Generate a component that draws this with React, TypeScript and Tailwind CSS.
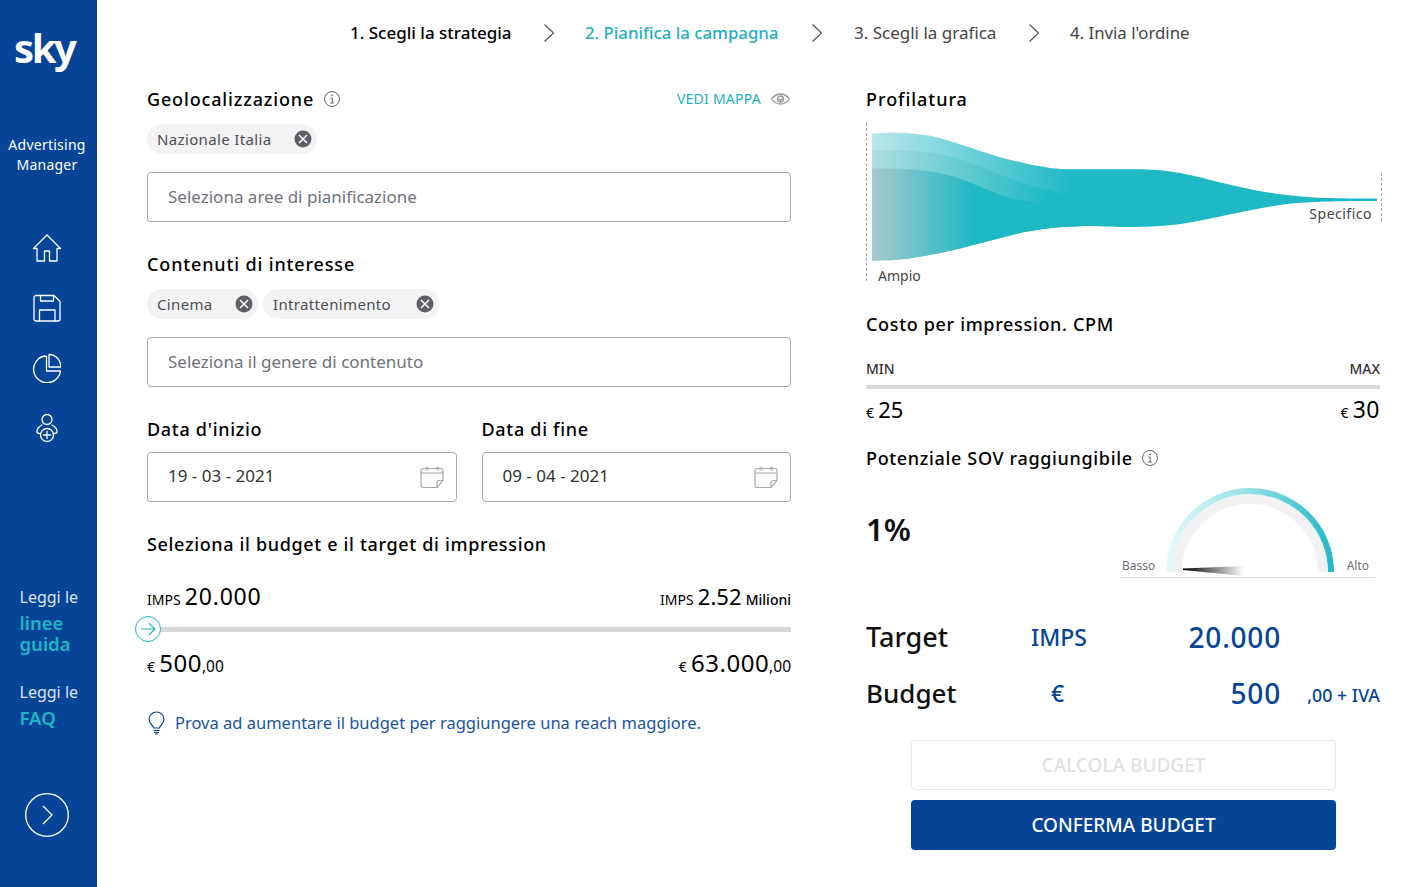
import React from "react";

const Chip = ({ label, w }: { label: string; w: string }) => (
  <div className={`flex h-[30px] items-center justify-between rounded-[15px] bg-[#f3f3f3] pl-[10px] pr-[5px] ${w}`}>
    <span className="text-[15px] tracking-[0.35px] text-[#4a4f55]">{label}</span>
    <svg width="18" height="18" viewBox="0 0 18 18">
      <circle cx="9" cy="9" r="8.500" fill="#5b6067" />
      <path d="M5 5l8 8M13 5l-8 8" stroke="#fff" strokeWidth="1.500" />
    </svg>
  </div>
);

const Info = () => (
  <svg width="18" height="18" viewBox="0 0 18 18" fill="none" stroke="#666">
    <circle cx="9" cy="9" r="7.500" strokeWidth="1" />
    <path d="M7.500 8h1.700v5M7.300 13h3.600" strokeWidth="1" />
    <circle cx="9" cy="5.300" r="0.900" fill="#666" stroke="none" />
  </svg>
);

const Calendar = () => (
  <svg width="24" height="24" viewBox="0 0 24 24" fill="none" stroke="#aaa" strokeWidth="1.200">
    <path d="M1 5.500a2 2 0 012-2h18a2 2 0 012 2v10l-6 7H3a2 2 0 01-2-2z" fill="#fbfbfb" />
    <path d="M1 8h22M23 15.500h-4a2 2 0 00-2 2v5" />
    <path d="M6 1.500v4M8 1.500v4M17.500 2a1.500 1.500 0 100 3 1.500 1.500 0 000-3z" strokeWidth="1" />
  </svg>
);

const Chevron = () => (
  <svg width="12" height="20" viewBox="0 0 12 20" fill="none" stroke="#555" strokeWidth="1.200" className="block">
    <path d="M1.500 1.500L10.500 10 1.500 18.500" />
  </svg>
);

const TextInput = ({ text }: { text: string }) => (
  <div className="flex h-[50px] items-center rounded-[4px] border border-[#a9a9a9] pl-5 text-[17px] text-[#6e7379]">
    {text}
  </div>
);

const DateInput = ({ value }: { value: string }) => (
  <div className="flex h-[50px] flex-1 items-center justify-between rounded-[4px] border border-[#a9a9a9] pl-5 pr-[12px] text-[17px] text-[#333]">
    <span className="pb-[2px]">{value}</span>
    <Calendar />
  </div>
);

const Heading = ({ children, cls = "tracking-[0.6px]" }: { children: React.ReactNode; cls?: string }) => (
  <h2 className={`text-[18px] font-medium leading-[24px] text-black ${cls}`}>{children}</h2>
);

const Icon = ({ children }: { children: React.ReactNode }) => (
  <svg width="30" height="30" viewBox="0 0 30 30" fill="none" stroke="#fff" strokeWidth="1.300" strokeLinejoin="round" strokeLinecap="round">
    {children}
  </svg>
);

const BODY =
  "M6 11.500C26 10 52 10 74 16C105 25 131 36 158 41C180 46 190 47 205 47.300L270 47.300C300 47.500 315 51 337 56C368 64 394 70 421 73C447 76 468 76.500 511 76.500V79C468 79 447 79.500 421 82C384 87 352 96 315 102C284 106 252 105 237 104.500C210 103 184 105 158 110C116 120 89 129 58 134C37 138 21 138.500 6 138.500Z";

export default function App() {
  return (
    <div className="flex h-[887px] w-[1424px] overflow-hidden bg-white font-['Noto_Sans','Liberation_Sans',sans-serif]">
      <aside className="flex w-[97px] shrink-0 flex-col bg-[#064497] text-white">
        <div className="h-[75px] pl-[14px] pt-[28px] text-[40px] font-bold leading-[40px] tracking-[-2.400px]">sky</div>
        <div className="mt-[60px] pr-[3px] text-center text-[14px] leading-[20px] tracking-[0.25px]">
          Advertising
          <br />
          Manager
        </div>
        <nav className="mt-[58px] flex flex-col items-center gap-[30px] pr-[3px]">
          <Icon>
            <path d="M15 2L1.500 15.500h3.500V28h7.500V18h5v10H25V15.500h3.500z" />
          </Icon>
          <Icon>
            <path d="M4 2.500h18l6 6V26a2 2 0 01-2 2H4a2 2 0 01-2-2V4.500a2 2 0 012-2z" />
            <path d="M8.500 2.500V8h13V2.500M7.500 28V17h15.500v11" />
          </Icon>
          <Icon>
            <path d="M12.500 3A13.500 13.500 0 1028.500 18H14.500V3.500z" />
            <path d="M17 1.500A11.500 11.500 0 0128.500 14H17z" />
          </Icon>
          <Icon>
            <circle cx="15" cy="6.500" r="5" />
            <path d="M10 12c-3 1.500-5 3.500-5 6.500 0 1.500 1 2 2.500 2h1.500M20 12c3 1.500 5 3.500 5 6.500 0 1.500-1 2-2.500 2H21" />
            <circle cx="15" cy="22" r="6.500" />
            <path d="M15 18.500v7M11.500 22h7" />
          </Icon>
        </nav>
        <div className="mt-[143px] pl-[19.500px] text-[16px]">
          <div className="leading-[22px] text-[#dde3ee]">Leggi le</div>
          <div className="mt-[4px] text-[18.500px] font-semibold leading-[21px] text-[#1fb4c4]">
            linee
            <br />
            guida
          </div>
          <div className="mt-[27px] leading-[22px] text-[#dde3ee]">Leggi le</div>
          <div className="mt-[4px] text-[18.500px] font-semibold leading-[21px] text-[#1fb4c4]">FAQ</div>
        </div>
        <div className="mt-[65px] flex justify-center pr-[3px]">
          <svg width="44" height="44" viewBox="0 0 44 44" fill="none" stroke="#fff" strokeWidth="1.300">
            <circle cx="22" cy="22" r="21.300" />
            <path d="M18 13l9 9-9 9" />
          </svg>
        </div>
      </aside>

      <main className="flex min-w-0 flex-1 flex-col">
        <header className="flex h-[67px] items-center whitespace-nowrap pb-[1px] pl-[253px] text-[17px]">
          <span className="w-[160px] font-medium text-black">1. Scegli la strategia</span>
          <span className="ml-[33px] mr-[30px]"><Chevron /></span>
          <span className="w-[194px] text-[16.800px] font-medium text-[#1fb0bf]">2. Pianifica la campagna</span>
          <span className="ml-[32px] mr-[31px]"><Chevron /></span>
          <span className="w-[141px] text-[#444]">3. Scegli la grafica</span>
          <span className="ml-[33px] mr-[30px]"><Chevron /></span>
          <span className="text-[16.800px] text-[#444]">4. Invia l'ordine</span>
        </header>

        <div className="flex pl-[50px]">
          <section className="w-[644px]">
            <div className="mt-[20px] flex h-[24px] items-center justify-between">
              <div className="flex items-center gap-[9px]">
                <Heading cls="tracking-[0.85px]">Geolocalizzazione</Heading>
                <Info />
              </div>
              <div className="flex items-center gap-[10px] pb-[1px] pr-[1px] text-[14px] tracking-[0.25px] text-[#1fb0bf]">
                VEDI MAPPA
                <svg width="19" height="12" viewBox="0 0 19 12" fill="none" stroke="#999" strokeWidth="1.300">
                  <path d="M.7 6C3 2.500 6 1 9.500 1s6.500 1.500 8.800 5C16 9.500 13 11 9.500 11S3 9.500.7 6z" />
                  <circle cx="9.500" cy="6" r="3" />
                  <path d="M7.500 5.500l2 2 2-2" />
                </svg>
              </div>
            </div>
            <div className="mt-[13px] flex gap-[5px]"><Chip label="Nazionale Italia" w="w-[170px]" /></div>
            <div className="mt-[18px]"><TextInput text="Seleziona aree di pianificazione" /></div>

            <Heading cls="mt-[30px] tracking-[0.85px]">Contenuti di interesse</Heading>
            <div className="mt-[13px] flex gap-[5px]">
              <Chip label="Cinema" w="w-[111px]" />
              <Chip label="Intrattenimento" w="w-[176px]" />
            </div>
            <div className="mt-[18px]"><TextInput text="Seleziona il genere di contenuto" /></div>

            <div className="mt-[30px] flex gap-[25px]">
              <div className="flex-1">
                <Heading cls="tracking-[0.7px]">Data d'inizio</Heading>
                <div className="mt-[11px] flex"><DateInput value="19 - 03 - 2021" /></div>
              </div>
              <div className="flex-1">
                <Heading cls="tracking-[0.7px]">Data di fine</Heading>
                <div className="mt-[11px] flex"><DateInput value="09 - 04 - 2021" /></div>
              </div>
            </div>

            <Heading cls="mt-[30px] tracking-[0.66px]">Seleziona il budget e il target di impression</Heading>

            <div className="mt-[23px] flex h-[30px] items-baseline justify-between text-black">
              <div><span className="text-[14px]">IMPS</span> <span className="text-[23px] tracking-[0.8px]">20.000</span></div>
              <div><span className="text-[14px]">IMPS</span> <span className="text-[22px]">2.52</span> <span className="text-[14px] font-medium">Milioni</span></div>
            </div>
            <div className="relative mt-[18px] h-[5px] bg-[#d8d8d8]">
              <div className="absolute left-[-12px] top-[-11px] flex h-[26px] w-[26px] items-center justify-center rounded-full border border-[#1fb9c5] bg-white">
                <svg width="16" height="14" viewBox="0 0 16 14" fill="none" stroke="#1fb9c5" strokeWidth="1.200">
                  <path d="M1 7h14M9 1l6 6-6 6" />
                </svg>
              </div>
            </div>
            <div className="mt-[13px] flex h-[30px] items-baseline justify-between text-black">
              <div><span className="text-[14px]">€</span> <span className="text-[24px] tracking-[0.5px]">500</span><span className="text-[15.500px]">,00</span></div>
              <div><span className="text-[14px]">€</span> <span className="text-[24px] tracking-[0.5px]">63.000</span><span className="text-[15.500px]">,00</span></div>
            </div>
            <div className="mt-[36px] flex items-center gap-[9px] text-[16.500px] text-[#1a54a3]">
              <svg width="19" height="24" viewBox="0 0 19 24" fill="none" stroke="#064497" strokeWidth="1.200">
                <path d="M6.500 17c0-2.500-4.500-4-4.500-8.500a7.500 7.500 0 0115 0c0 4.500-4.500 6-4.500 8.500z" />
                <path d="M6.500 19.500h6M7 21.500h5M8 23h3" />
              </svg>
              Prova ad aumentare il budget per raggiungere una reach maggiore.
            </div>
          </section>

          <section className="ml-[75px] w-[514px]">
            <Heading cls="mt-[20px] tracking-[0.95px]">Profilatura</Heading>
            <div className="relative mt-[11px] h-[164px]">
              <svg width="516" height="164" viewBox="0 0 516 164" className="block">
                <defs>
                  <linearGradient id="g1" gradientUnits="userSpaceOnUse" x1="6" x2="205" y1="0" y2="0">
                    <stop offset="0" stopColor="#b8e8eb" />
                    <stop offset="1" stopColor="#1fb9c5" />
                  </linearGradient>
                  <linearGradient id="g2" gradientUnits="userSpaceOnUse" x1="6" x2="180" y1="0" y2="0">
                    <stop offset="0" stopColor="#aedee1" />
                    <stop offset="1" stopColor="#1fb9c5" />
                  </linearGradient>
                  <linearGradient id="g3" gradientUnits="userSpaceOnUse" x1="6" x2="106" y1="0" y2="0">
                    <stop offset="0" stopColor="#a9c9cd" />
                    <stop offset="1" stopColor="#1fb9c5" />
                  </linearGradient>
                  <clipPath id="body"><path d={BODY} /></clipPath>
                </defs>
                <path d="M.5 1V161M515.500 51V101" stroke="#aaa" strokeDasharray="3 2" fill="none" />
                <path d={BODY} fill="url(#g1)" />
                <g clipPath="url(#body)">
                  <path d="M6 28C42 27.500 74 30 100 39C126 49 152 61 181 68L215 76V150H6Z" fill="url(#g2)" />
                  <path d="M6 46.500C37 46 63 47 89 55C110 62 126 70 143 76L215 90V150H6Z" fill="url(#g3)" />
                </g>
              </svg>
              <span className="absolute left-[12px] top-[145px] text-[14px] leading-[18px] text-[#444]">Ampio</span>
              <span className="absolute right-[8px] top-[83px] text-[14px] leading-[18px] tracking-[0.5px] text-[#444]">Specifico</span>
            </div>

            <Heading cls="mt-[26px] tracking-[0.66px]">Costo per impression. CPM</Heading>
            <div className="mt-[23px] flex justify-between text-[14px] font-medium leading-[20px] text-[#333]">
              <span>MIN</span>
              <span>MAX</span>
            </div>
            <div className="mt-[6px] h-[4px] bg-[#d8d8d8]" />
            <div className="mt-[6px] flex items-baseline justify-between leading-[28px] text-black">
              <div><span className="text-[14px]">€</span> <span className="text-[22px]">25</span></div>
              <div><span className="text-[14px]">€</span> <span className="text-[23px] tracking-[0.5px]">30</span></div>
            </div>
            <div className="mt-[19px] flex items-center gap-[8px]">
              <Heading cls="tracking-[0.66px]">Potenziale SOV raggiungibile</Heading>
              <Info />
            </div>
            <div className="mt-[18px] flex h-[90px]">
              <div className="w-[254px] pt-[19px] text-[31px] font-semibold leading-[44px] text-[#111]">1%</div>
              <div className="relative h-[90px] w-[255px] border-b border-[#dcdcdc]">
                <svg width="255" height="89" viewBox="0 0 255 89" className="block">
                  <defs>
                    <linearGradient id="gauge" gradientUnits="userSpaceOnUse" x1="46" x2="214" y1="0" y2="0">
                      <stop offset="0" stopColor="#e8fbfc" />
                      <stop offset="0.5" stopColor="#8fdfe4" />
                      <stop offset="1" stopColor="#1fb9c5" />
                    </linearGradient>
                    <linearGradient id="needle" gradientUnits="userSpaceOnUse" x1="63" x2="124" y1="0" y2="0">
                      <stop offset="0" stopColor="#000" />
                      <stop offset="1" stopColor="#000" stopOpacity="0" />
                    </linearGradient>
                  </defs>
                  <path d="M57 84A73 73 0 01203 84" fill="none" stroke="#f2f2f2" strokeWidth="10" />
                  <path d="M49 84A81 81 0 01211 84" fill="none" stroke="url(#gauge)" strokeWidth="6" />
                  <path d="M63 80.500L124 78V88L63 82Z" fill="url(#needle)" />
                </svg>
                <span className="absolute left-[2px] top-[70px] text-[12px] leading-[16px] text-[#6b7076]">Basso</span>
                <span className="absolute right-[6px] top-[70px] text-[12px] leading-[16px] text-[#6b7076]">Alto</span>
              </div>
            </div>

            <div className="mt-[41px] flex h-[36px] items-center text-[#064497]">
              <span className="w-[165px] text-[27px] font-medium text-[#111]">Target</span>
              <span className="w-[100px] text-[23px] font-medium">IMPS</span>
              <span className="w-[150px] text-right text-[28px] font-medium tracking-[0.8px]">20.000</span>
            </div>
            <div className="mt-[20px] flex h-[36px] items-center text-[#064497]">
              <span className="w-[165px] text-[26px] font-medium text-[#111]">Budget</span>
              <span className="w-[100px] pl-[20px] text-[23px] font-medium">€</span>
              <span className="w-[150px] text-right text-[28px] font-medium tracking-[0.8px]">500</span>
              <span className="flex-1 pt-[5px] text-right text-[17.800px] font-medium">,00 + IVA</span>
            </div>

            <div className="ml-[45px] mt-[29px] flex w-[425px] flex-col gap-[10px]">
              <div className="flex h-[50px] items-center justify-center rounded-[4px] border border-[#e8e8e8] text-[19px] font-medium text-[#e2e2e2]">CALCOLA BUDGET</div>
              <div className="flex h-[50px] items-center justify-center rounded-[4px] bg-[#064497] text-[19px] font-medium text-white">CONFERMA BUDGET</div>
            </div>
          </section>
        </div>
      </main>
    </div>
  );
}
